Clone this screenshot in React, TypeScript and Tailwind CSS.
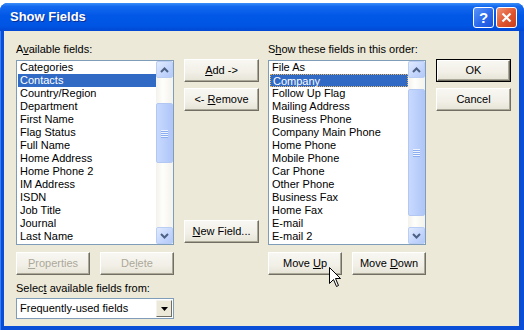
import type { ReactNode } from 'react';

const leftItems = [
  'Categories', 'Contacts', 'Country/Region', 'Department', 'First Name', 'Flag Status', 'Full Name',
  'Home Address', 'Home Phone 2', 'IM Address', 'ISDN', 'Job Title', 'Journal', 'Last Name',
];

const rightItems = [
  'File As', 'Company', 'Follow Up Flag', 'Mailing Address', 'Business Phone', 'Company Main Phone',
  'Home Phone', 'Mobile Phone', 'Car Phone', 'Other Phone', 'Business Fax', 'Home Fax', 'E-mail', 'E-mail 2',
];

function Chevron({ up }: { up?: boolean }) {
  return (
    <svg width="9" height="6" viewBox="0 0 9 6">
      <path d={up ? 'M1 5 L4.5 1.5 L8 5' : 'M1 1 L4.5 4.5 L8 1'} fill="none" stroke="#4D6185" strokeWidth="2" />
    </svg>
  );
}

function ScrollButton({ up }: { up?: boolean }) {
  return (
    <div className="h-[17px] w-[17px] flex items-center justify-center rounded-[2px] border border-[#B9CDF5] bg-[linear-gradient(135deg,#E1EBFE_0%,#C3D5FC_60%,#B4C9F6_100%)]">
      <Chevron up={up} />
    </div>
  );
}

function Scrollbar({ offset, size }: { offset: number; size: number }) {
  return (
    <div className="w-[17px] h-full flex flex-col bg-[linear-gradient(90deg,#F3F2EC_0%,#FEFEFB_40%,#F3F2EC_100%)]">
      <ScrollButton up />
      <div className="flex-1 flex flex-col">
        <div style={{ height: offset }} />
        <div
          className="w-[17px] flex items-center justify-center rounded-[2px] border border-[#B2C7F2] bg-[linear-gradient(90deg,#C8D9FD_0%,#BCD0FB_50%,#B0C6F7_100%)]"
          style={{ height: size }}
        >
          <div className="flex flex-col gap-[1px]">
            {[0, 1, 2, 3].map((i) => (
              <div key={i} className="w-[7px] h-[1px] bg-[#EEF4FE] shadow-[0_1px_0_#8CAEF0]" />
            ))}
          </div>
        </div>
        <div className="flex-1" />
      </div>
      <ScrollButton />
    </div>
  );
}

function ListBox({ items, selected, focus, offset, size }: { items: string[]; selected: number; focus?: boolean; offset: number; size: number }) {
  return (
    <div className="h-[185px] w-[158px] border border-[#7F9DB9] bg-white flex">
      <div className="flex-1 flex flex-col pt-[0px] pl-[1px]">
        {items.map((item, i) => (
          <div
            key={item}
            className={
              'h-[13px] leading-[12px] pl-[2px] whitespace-nowrap ' +
              (i === selected
                ? 'bg-[#316AC5] text-white ' + (focus ? 'border border-dotted border-[#E7B65E] pl-[1px] leading-[11px]' : '')
                : 'text-black')
            }
          >
            {item}
          </div>
        ))}
      </div>
      <Scrollbar offset={offset} size={size} />
    </div>
  );
}

function Btn({ children, w = 'w-[75px]', disabled, isDefault }: { children: ReactNode; w?: string; disabled?: boolean; isDefault?: boolean }) {
  const inner = (
    <div
      className={
        'h-full w-full flex items-center justify-center border-t border-l border-white border-r border-b border-r-[#716F64] border-b-[#716F64] shadow-[inset_-1px_-1px_0_#ACA899] bg-[linear-gradient(180deg,#F8F7F2_0%,#F1EFE6_60%,#E6E3D6_100%)] ' +
        (disabled ? 'text-[#ACA899]' : 'text-black')
      }
    >
      <span>{children}</span>
    </div>
  );
  return isDefault ? (
    <div className={w + ' h-[23px] border border-black'}>{inner}</div>
  ) : (
    <div className={w + ' h-[23px]'}>{inner}</div>
  );
}

export default function App() {
  return (
    <div className="w-[524px] h-[330px] bg-white overflow-hidden relative text-[11px] font-['Liberation_Sans',Arial,sans-serif]">
      <div className="mt-[3px] h-[327px] rounded-t-[8px] bg-[#0A4ED8] flex flex-col pl-[4px] pr-[5px] pb-[4px] shadow-[inset_1px_0_0_#3A80F0]">
        {/* title bar */}
        <div className="h-[28px] -mx-[4px] -mr-[5px] px-[10px] rounded-t-[8px] flex items-center bg-[linear-gradient(180deg,#3C8FF8_0%,#1469F0_12%,#0258E6_45%,#0055E4_80%,#0248D4_100%)]">
          <span className="flex-1 text-white font-bold text-[13px] [text-shadow:1px_1px_0_#0A2E96]">Show Fields</span>
          <div className="flex gap-[2px] mr-[-3px]">
            <div className="w-[21px] h-[21px] rounded-[3px] border border-white bg-[linear-gradient(135deg,#5A93F7_0%,#2B69EC_55%,#1A53DA_100%)] flex items-center justify-center text-white font-bold text-[15px] leading-none">
              ?
            </div>
            <div className="w-[21px] h-[21px] rounded-[3px] border border-white bg-[linear-gradient(135deg,#F09274_0%,#E0542C_55%,#C8401C_100%)] flex items-center justify-center">
              <svg width="11" height="11" viewBox="0 0 11 11">
                <path d="M1.5 1.5 L9.5 9.5 M9.5 1.5 L1.5 9.5" stroke="white" strokeWidth="2.2" />
              </svg>
            </div>
          </div>
        </div>

        {/* body */}
        <div className="flex-1 bg-[#ECE9D8] flex pl-[12px]">
          {/* left column */}
          <div className="w-[158px] flex flex-col pt-[10px]">
            <div className="h-[16px] leading-[16px]">
              A<span className="underline">v</span>ailable fields:
            </div>
            <div className="mt-[3px]">
              <ListBox items={leftItems} selected={1} offset={25} size={60} />
            </div>
            <div className="mt-[7px] flex gap-[10px]">
              <Btn w="w-[74px]" disabled>
                <span className="underline">P</span>roperties
              </Btn>
              <Btn w="w-[74px]" disabled>
                De<span className="underline">l</span>ete
              </Btn>
            </div>
            <div className="mt-[5px] h-[16px] leading-[16px]">
              Selec<span className="underline">t</span> available fields from:
            </div>
            <div className="mt-[2px] h-[21px] w-[158px] border border-[#7F9DB9] bg-white flex items-center">
              <span className="flex-1 pl-[3px]">Frequently-used fields</span>
              <div className="w-[16px] h-[17px] mr-[1px] flex items-center justify-center border-t border-l border-[#F4F3EE] border-r border-b border-r-[#716F64] border-b-[#716F64] bg-[#ECE9D8]">
                <svg width="7" height="4" viewBox="0 0 7 4">
                  <path d="M0 0 H7 L3.5 4 Z" fill="black" />
                </svg>
              </div>
            </div>
          </div>

          {/* middle column */}
          <div className="w-[75px] ml-[10px] flex flex-col pt-[28px]">
            <Btn>
              <span className="underline">A</span>dd -&gt;
            </Btn>
            <div className="mt-[6px]">
              <Btn>
                &lt;- <span className="underline">R</span>emove
              </Btn>
            </div>
            <div className="mt-[109px]">
              <Btn>
                <span className="underline">N</span>ew Field...
              </Btn>
            </div>
          </div>

          {/* right column */}
          <div className="w-[158px] ml-[9px] flex flex-col pt-[10px]">
            <div className="h-[16px] leading-[16px]">
              S<span className="underline">h</span>ow these fields in this order:
            </div>
            <div className="mt-[3px]">
              <ListBox items={rightItems} selected={1} focus offset={11} size={127} />
            </div>
            <div className="mt-[7px] flex gap-[10px]">
              <Btn w="w-[74px]">
                Move <span className="underline">U</span>p
              </Btn>
              <Btn w="w-[74px]">
                Move <span className="underline">D</span>own
              </Btn>
            </div>
          </div>

          {/* ok column */}
          <div className="w-[75px] ml-[10px] flex flex-col pt-[28px]">
            <Btn isDefault>OK</Btn>
            <div className="mt-[6px]">
              <Btn>Cancel</Btn>
            </div>
          </div>
        </div>
      </div>

      {/* mouse pointer */}
      <svg className="absolute left-[329px] top-[267px]" width="13" height="21" viewBox="0 0 13 21">
        <path d="M0.5 0.5 L0.5 16.5 L4.5 12.5 L7.5 19.5 L9.5 18.5 L6.5 11.5 L11.5 11.5 Z" fill="white" stroke="black" strokeWidth="1" strokeLinejoin="miter" />
      </svg>
    </div>
  );
}
